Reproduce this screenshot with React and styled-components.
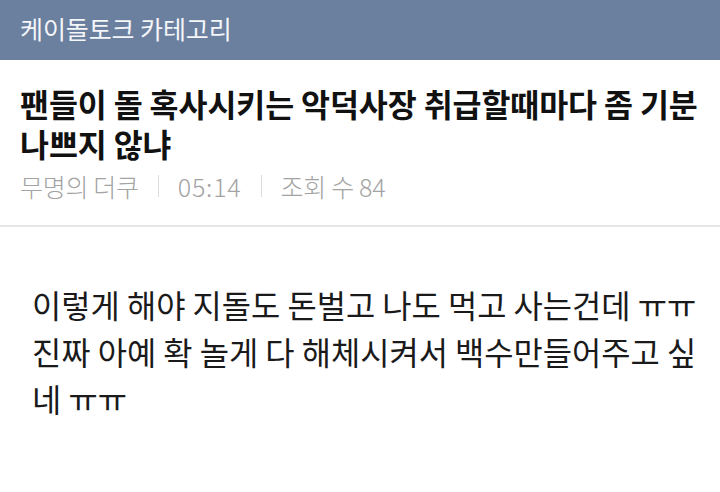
import React from 'react';
import { styled, createGlobalStyle } from 'styled-components';

const GlobalStyle = createGlobalStyle`
  html, body {
    margin: 0;
    padding: 0;
    background: #ffffff;
  }
  body {
    font-family: "Noto Sans CJK KR", "Noto Sans", sans-serif;
  }
`;

const post = {
  category: '케이돌토크 카테고리',
  title: '팬들이 돌 혹사시키는 악덕사장 취급할때마다 좀 기분 나쁘지 않냐',
  author: '무명의 더쿠',
  time: '05:14',
  views: 84,
  body: [
    '이렇게 해야 지돌도 돈벌고 나도 먹고 사는건데 ㅠㅠ',
    '진짜 아예 확 놀게 다 해체시켜서 백수만들어주고 싶',
    '네 ㅠㅠ',
  ],
};

const App = () => (
  <Page>
    <GlobalStyle />
    <CategoryBar>{post.category}</CategoryBar>

    <PostHead>
      <Title>{post.title}</Title>
      <Meta>
        <MetaItem>{post.author}</MetaItem>
        <Divider />
        <MetaItem $num>{post.time}</MetaItem>
        <Divider />
        <MetaItem>조회 수 {post.views}</MetaItem>
      </Meta>
    </PostHead>

    <PostBody>
      {post.body.map((line, i) => (
        <Line key={i}>{line}</Line>
      ))}
    </PostBody>
  </Page>
);

export default App;

const Page = styled.div`
  width: 720px;
  min-height: 492px;
  background: #fff;
`;

const CategoryBar = styled.div`
  height: 60px;
  display: flex;
  align-items: center;
  padding: 0 20px 4px;
  background: #6b7f9f;
  color: #f4f6f9;
  font-size: 25px;
  letter-spacing: -0.1px;
  box-sizing: border-box;
`;

const PostHead = styled.div`
  padding: 23px 20px 24px;
  border-bottom: 2px solid #e6e6e6;
`;

const Title = styled.h1`
  margin: 0;
  font-size: 31.5px;
  line-height: 40px;
  font-weight: 700;
  color: #111;
  letter-spacing: -0.1px;
`;

const Meta = styled.div`
  display: flex;
  align-items: center;
  gap: 19px;
  margin-top: 8px;
  height: 30px;
  color: #a3a3a3;
  font-size: 25px;
  font-weight: 300;
  letter-spacing: -0.3px;
`;

const MetaItem = styled.span`
  white-space: nowrap;
  letter-spacing: ${(p) => (p.$num ? '0.8px' : 'inherit')};
`;

const Divider = styled.span`
  width: 1px;
  height: 22px;
  background: #dcdcdc;
`;

const PostBody = styled.div`
  padding: 54px 32px 40px;
`;

const Line = styled.p`
  margin: 0;
  font-size: 31.8px;
  line-height: 47px;
  color: #1a1a1a;
  white-space: nowrap;
`;
